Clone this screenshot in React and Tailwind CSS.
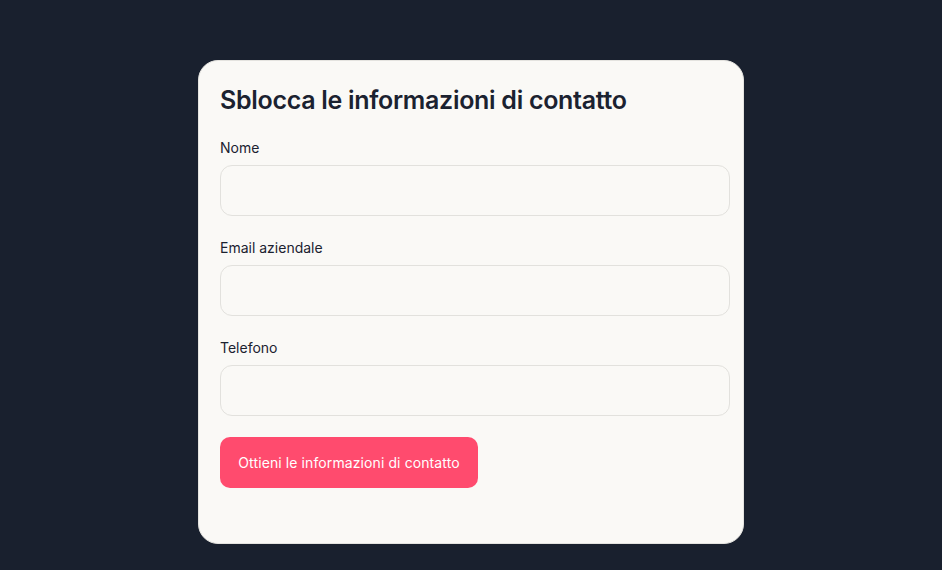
export default function App() {
  const fields = ['Nome', 'Email aziendale', 'Telefono'];

  return (
    <div className="min-h-[570px] w-full bg-[#19202e] flex justify-center pt-[60px] font-['Inter',sans-serif]">
      <div className="w-[546px] h-[484px] bg-[#faf9f6] border border-[#e4e3df] rounded-[20px] pl-[21px] pr-[13px] pt-[21px]">
        <h2 className="text-[25px] leading-[36px] font-semibold text-[#1b2230] tracking-[-0.3px]">
          Sblocca le informazioni di contatto
        </h2>

        <div className="mt-[20px] flex flex-col gap-[22px]">
          {fields.map((f) => (
            <label key={f} className="flex flex-col gap-[7px]">
              <span className="text-[14px] leading-[20px] text-[#1b2230]">{f}</span>
              <input
                type="text"
                className="h-[51px] w-full rounded-[12px] border border-[#e2e1dd] bg-[#faf9f6] px-3 outline-none"
              />
            </label>
          ))}
        </div>

        <button className="mt-[21px] h-[51px] w-[258px] rounded-[10px] bg-[#ff4b6e] text-white text-[14px] tracking-[0.1px]">
          Ottieni le informazioni di contatto
        </button>
      </div>
    </div>
  );
}
